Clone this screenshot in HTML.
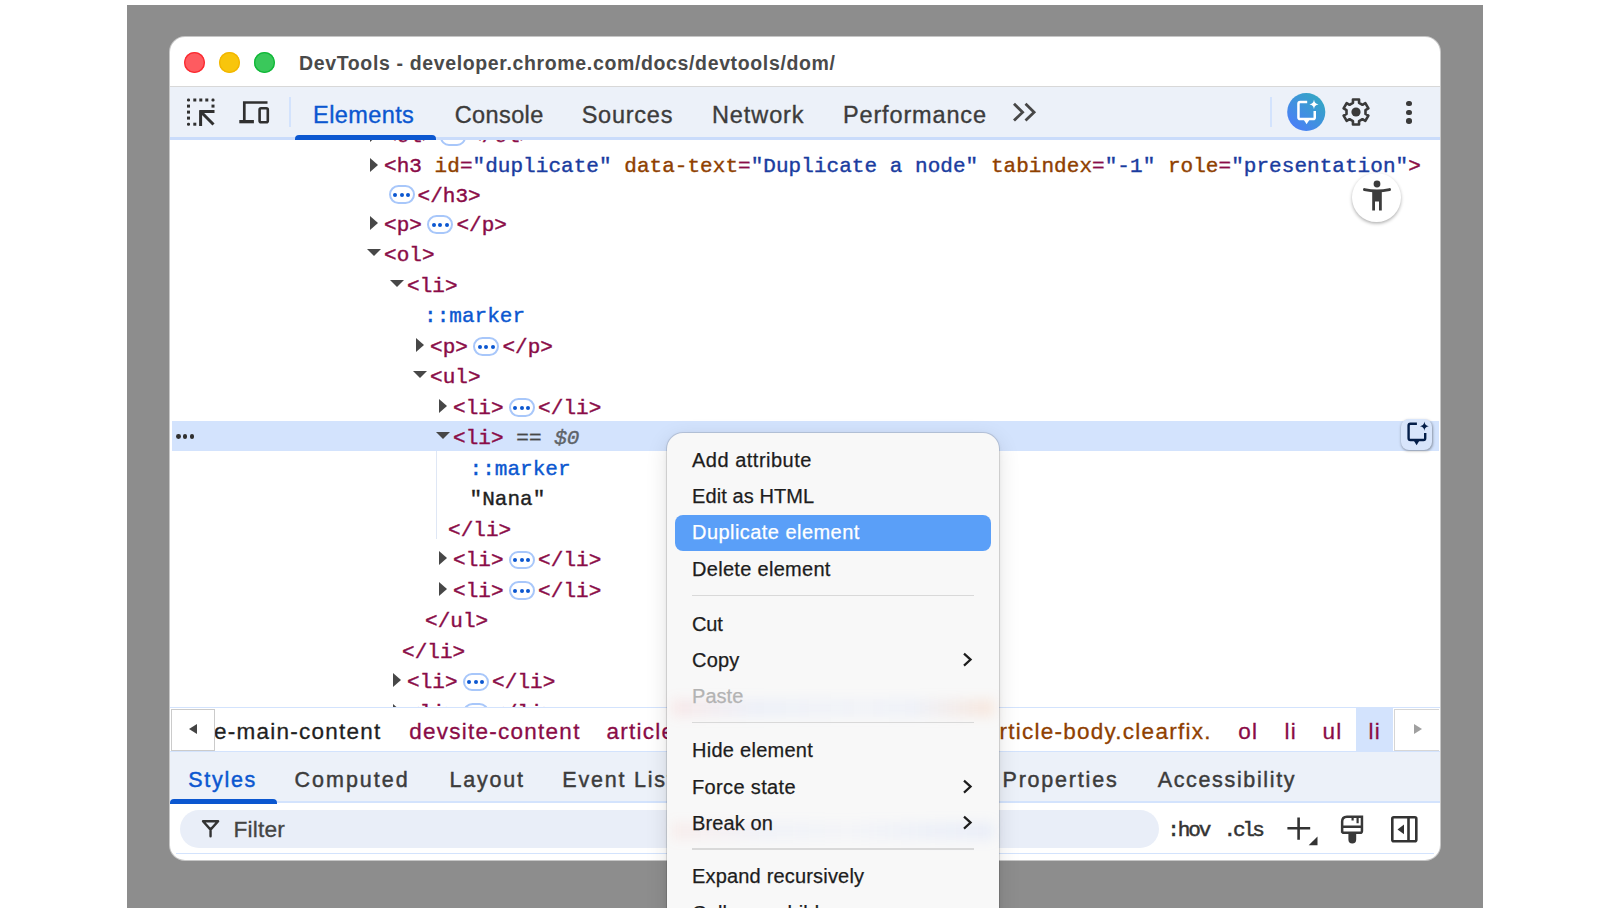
<!DOCTYPE html>
<html><head><meta charset="utf-8"><style>
*{margin:0;padding:0;box-sizing:border-box}
html,body{width:1600px;height:908px;overflow:hidden;background:#fff;font-family:"Liberation Sans",sans-serif}
#bg{position:absolute;left:127px;top:5px;width:1356px;height:903px;background:#8d8d8d}
#win{position:absolute;left:170px;top:37px;width:1270px;height:823px;background:#fff;border-radius:15px;box-shadow:0 0 0 1px #c6c6c6}
.a{position:absolute}
.t{position:absolute;white-space:pre;line-height:1;-webkit-text-stroke:0.3px currentColor}
.t.m{font-family:"Liberation Mono",monospace;font-size:21px;letter-spacing:0.04px;-webkit-text-stroke:0.4px currentColor}
.tg{color:#8a0c47}.an{color:#8f4000}.av{color:#1a3c9f}.ps{color:#0b57d0}.tx{color:#1f1f1f}
.bd{position:absolute;width:26.5px;height:18.5px;border:2px solid #a8c7fa;border-radius:9.5px}
.bd i{position:absolute;top:5.6px;width:4px;height:4px;border-radius:50%;background:#0b57d0}
.tr{position:absolute;width:0;height:0;border-top:7px solid transparent;border-bottom:7px solid transparent;border-left:8px solid #474747}
.td{position:absolute;width:0;height:0;border-left:7px solid transparent;border-right:7px solid transparent;border-top:7.5px solid #474747}
.mi{position:absolute;left:692px;font-size:20px;letter-spacing:0.45px;color:#1d1d1d;white-space:pre;line-height:1;-webkit-text-stroke:0.25px currentColor}
</style></head><body>
<div id="bg"></div>
<div id="win"></div>
<div class="a" style="left:184.1px;top:52.1px;width:21.2px;height:21.2px;border-radius:50%;background:#fe5b60;box-shadow:inset 0 0 0 1.3px #fb2a30"></div>
<div class="a" style="left:219.1px;top:52.1px;width:21.2px;height:21.2px;border-radius:50%;background:#f8c50c;box-shadow:inset 0 0 0 1.3px #f2b600"></div>
<div class="a" style="left:254.1px;top:52.1px;width:21.2px;height:21.2px;border-radius:50%;background:#3ac85b;box-shadow:inset 0 0 0 1.3px #10b838"></div>
<div class="t" style="left:299px;top:54.49px;font-size:19.5px;font-weight:bold;color:#4a4a4a;letter-spacing:0.64px;-webkit-text-stroke:0">DevTools - developer.chrome.com/docs/devtools/dom/</div>
<div class="a" style="left:170px;top:86px;width:1270px;height:1px;background:#d8d8d8"></div>
<div class="a" style="left:170px;top:87px;width:1270px;height:50px;background:#ecf1f9"></div>
<div class="a" style="left:170px;top:137px;width:1270px;height:3px;background:#cadcfb"></div>
<div class="a" style="left:288.5px;top:97px;width:2px;height:30px;background:#d3e3fd"></div>
<div class="a" style="left:1270px;top:97px;width:2px;height:30px;background:#d3e3fd"></div>
<svg class="a" style="left:184px;top:95px" width="34" height="34" viewBox="0 0 34 34">
<g fill="#303030">
<rect x="3" y="3.5" width="3" height="3" rx="1.2"/><rect x="9.3" y="3.5" width="3" height="3"/><rect x="15.3" y="3.5" width="3" height="3"/><rect x="21.3" y="3.5" width="3" height="3"/><rect x="27.5" y="3.5" width="3" height="3" rx="1.2"/>
<rect x="3" y="9.6" width="3" height="3"/><rect x="3" y="15.6" width="3" height="3"/><rect x="3" y="21.6" width="3" height="3"/><rect x="3" y="27.7" width="3" height="3" rx="1.2"/>
<rect x="9.3" y="27.7" width="3" height="3"/><rect x="27.5" y="9.6" width="3" height="3"/>
</g>
<path d="M15.6 16.5 H30.5 M16.6 15.3 V31 M16.6 16.5 L29.5 29.5" stroke="#303030" stroke-width="3" fill="none"/>
</svg>
<svg class="a" style="left:236px;top:98px" width="36" height="30" viewBox="0 0 36 30">
<path d="M8.3 25 V4.5 H31.5" stroke="#303030" stroke-width="2.7" fill="none"/>
<rect x="3.3" y="22" width="14.6" height="3.3" fill="#303030"/>
<rect x="23.6" y="10.2" width="8.2" height="14" rx="1.5" stroke="#303030" stroke-width="2.6" fill="none"/>
</svg>
<div class="t" style="left:313.1px;top:103.51px;font-size:23.5px;color:#0b57d0;letter-spacing:0.4px;-webkit-text-stroke:0.35px #0b57d0">Elements</div>
<div class="t" style="left:454.7px;top:103.51px;font-size:23.5px;color:#3c3c3c;letter-spacing:0.4px;-webkit-text-stroke:0.35px #3c3c3c">Console</div>
<div class="t" style="left:581.7px;top:103.51px;font-size:23.5px;color:#3c3c3c;letter-spacing:0.75px;-webkit-text-stroke:0.35px #3c3c3c">Sources</div>
<div class="t" style="left:712.0px;top:103.51px;font-size:23.5px;color:#3c3c3c;letter-spacing:0.9px;-webkit-text-stroke:0.35px #3c3c3c">Network</div>
<div class="t" style="left:843.0px;top:103.51px;font-size:23.5px;color:#3c3c3c;letter-spacing:0.85px;-webkit-text-stroke:0.35px #3c3c3c">Performance</div>
<div class="a" style="left:294.5px;top:135px;width:141.3px;height:5px;background:#0b57d0;border-radius:4px 4px 0 0"></div>
<svg class="a" style="left:1008px;top:98px" width="34" height="28" viewBox="0 0 34 28">
<path d="M6 5.8 L14.6 14.3 L6 22.6 M17.5 5.8 L26.1 14.3 L17.5 22.6" stroke="#474747" stroke-width="2.8" fill="none"/>
</svg>
<svg class="a" style="left:1286px;top:92px" width="40" height="40" viewBox="0 0 40 40">
<defs><linearGradient id="g1" x1="0.15" y1="0.9" x2="0.85" y2="0.1"><stop offset="0" stop-color="#4b7ff7"/><stop offset="1" stop-color="#33a6c4"/></linearGradient></defs>
<circle cx="20.25" cy="20" r="19.05" fill="url(#g1)"/>
<path d="M21.2 10.05 H14.2 Q12.45 10.05 12.45 11.8 V25.4 Q12.45 26.95 14.2 26.95 H27.2 Q28.75 26.95 28.75 25.4 V19" stroke="#fff" stroke-width="2.5" fill="none"/>
<path d="M16.6 26 L20.6 32.2 L24.6 26 Z" fill="#fff"/>
<path d="M28 7.6 C28.55 10.7 29.4 11.7 32.5 12.4 C29.4 13.1 28.55 14.1 28 17.2 C27.45 14.1 26.6 13.1 23.5 12.4 C26.6 11.7 27.45 10.7 28 7.6 Z" fill="#fff"/>
</svg>
<svg class="a" style="left:1335.8px;top:92.05px" width="40" height="40" viewBox="0 0 40 40">
<path d="M16.95 10.80 L16.95 7.45 L23.05 7.45 L23.05 10.80 L26.44 12.76 L29.34 11.08 L32.39 16.37 L29.49 18.04 L29.49 21.96 L32.39 23.63 L29.34 28.92 L26.44 27.24 L23.05 29.20 L23.05 32.55 L16.95 32.55 L16.95 29.20 L13.56 27.24 L10.66 28.92 L7.61 23.63 L10.51 21.96 L10.51 18.04 L7.61 16.37 L10.66 11.08 L13.56 12.76 Z" stroke="#3a3a3a" stroke-width="2.6" fill="none" stroke-linejoin="round"/>
<circle cx="20" cy="20" r="4.6" fill="#3a3a3a"/>
</svg>
<div class="a" style="left:1406.45px;top:100.9px;width:5.6px;height:5.6px;border-radius:50%;background:#3a3a3a"></div>
<div class="a" style="left:1406.45px;top:109.5px;width:5.6px;height:5.6px;border-radius:50%;background:#3a3a3a"></div>
<div class="a" style="left:1406.45px;top:118.05px;width:5.6px;height:5.6px;border-radius:50%;background:#3a3a3a"></div>
<div class="a" style="left:0;top:140px;width:1440px;height:567px;overflow:hidden"><div class="a" style="left:0;top:-140px;width:1600px;height:908px">
<div class="a" style="left:172px;top:421px;width:1267px;height:29.7px;background:#d3e3fd"></div>
<div class="a" style="left:435.5px;top:451px;width:1.5px;height:88px;background:#dfe7f5"></div>
<div class="tr" style="left:370.00px;top:127.50px"></div>
<div class="t m" style="left:384.00px;top:126.20px;"><span class="tg">&lt;ol&gt;</span></div>
<div class="bd" style="left:439.60px;top:127.95px"><i style="left:2.6px"></i><i style="left:9.1px"></i><i style="left:15.6px"></i></div>
<div class="t m" style="left:469.10px;top:126.20px;"><span class="tg">&lt;/ol&gt;</span></div>
<div class="tr" style="left:370.00px;top:157.50px"></div>
<div class="t m" style="left:384.00px;top:156.40px;"><span class="tg">&lt;h3 </span><span class="an">id</span><span class="tg">=</span><span class="av">"duplicate"</span> <span class="an">data-text</span><span class="tg">=</span><span class="av">"Duplicate a node"</span> <span class="an">tabindex</span><span class="tg">=</span><span class="av">"-1"</span> <span class="an">role</span><span class="tg">=</span><span class="av">"presentation"</span><span class="tg">&gt;</span></div>
<div class="bd" style="left:388.50px;top:185.25px"><i style="left:2.6px"></i><i style="left:9.1px"></i><i style="left:15.6px"></i></div>
<div class="t m" style="left:417.50px;top:185.65px;"><span class="tg">&lt;/h3&gt;</span></div>
<div class="tr" style="left:370.00px;top:215.60px"></div>
<div class="t m" style="left:384.00px;top:214.50px;"><span class="tg">&lt;p&gt;</span></div>
<div class="bd" style="left:426.95px;top:215.35px"><i style="left:2.6px"></i><i style="left:9.1px"></i><i style="left:15.6px"></i></div>
<div class="t m" style="left:456.45px;top:214.50px;"><span class="tg">&lt;/p&gt;</span></div>
<div class="td" style="left:367.00px;top:249.10px"></div>
<div class="t m" style="left:384.00px;top:245.00px;"><span class="tg">&lt;ol&gt;</span></div>
<div class="td" style="left:390.00px;top:279.60px"></div>
<div class="t m" style="left:407.00px;top:275.50px;"><span class="tg">&lt;li&gt;</span></div>
<div class="t m" style="left:424.00px;top:306.00px;"><span class="ps">::marker</span></div>
<div class="tr" style="left:416.00px;top:337.60px"></div>
<div class="t m" style="left:430.00px;top:336.50px;"><span class="tg">&lt;p&gt;</span></div>
<div class="bd" style="left:472.95px;top:337.35px"><i style="left:2.6px"></i><i style="left:9.1px"></i><i style="left:15.6px"></i></div>
<div class="t m" style="left:502.45px;top:336.50px;"><span class="tg">&lt;/p&gt;</span></div>
<div class="td" style="left:413.00px;top:371.10px"></div>
<div class="t m" style="left:430.00px;top:367.00px;"><span class="tg">&lt;ul&gt;</span></div>
<div class="tr" style="left:439.00px;top:398.60px"></div>
<div class="t m" style="left:453.00px;top:397.50px;"><span class="tg">&lt;li&gt;</span></div>
<div class="bd" style="left:508.60px;top:398.35px"><i style="left:2.6px"></i><i style="left:9.1px"></i><i style="left:15.6px"></i></div>
<div class="t m" style="left:538.10px;top:397.50px;"><span class="tg">&lt;/li&gt;</span></div>
<div class="td" style="left:436.00px;top:432.10px"></div>
<div class="t m" style="left:453.00px;top:428.00px;"><span class="tg">&lt;li&gt;</span> <span style="color:#474747">==</span> <span style="color:#5f6368;font-style:italic">$0</span></div>
<div class="t m" style="left:469.50px;top:458.50px;"><span class="ps">::marker</span></div>
<div class="t m" style="left:469.50px;top:489.00px;"><span class="tx">"Nana"</span></div>
<div class="t m" style="left:448.00px;top:519.50px;"><span class="tg">&lt;/li&gt;</span></div>
<div class="tr" style="left:439.00px;top:551.10px"></div>
<div class="t m" style="left:453.00px;top:550.00px;"><span class="tg">&lt;li&gt;</span></div>
<div class="bd" style="left:508.60px;top:550.85px"><i style="left:2.6px"></i><i style="left:9.1px"></i><i style="left:15.6px"></i></div>
<div class="t m" style="left:538.10px;top:550.00px;"><span class="tg">&lt;/li&gt;</span></div>
<div class="tr" style="left:439.00px;top:581.60px"></div>
<div class="t m" style="left:453.00px;top:580.50px;"><span class="tg">&lt;li&gt;</span></div>
<div class="bd" style="left:508.60px;top:581.35px"><i style="left:2.6px"></i><i style="left:9.1px"></i><i style="left:15.6px"></i></div>
<div class="t m" style="left:538.10px;top:580.50px;"><span class="tg">&lt;/li&gt;</span></div>
<div class="t m" style="left:425.00px;top:611.00px;"><span class="tg">&lt;/ul&gt;</span></div>
<div class="t m" style="left:402.00px;top:641.50px;"><span class="tg">&lt;/li&gt;</span></div>
<div class="tr" style="left:393.00px;top:673.10px"></div>
<div class="t m" style="left:407.00px;top:672.00px;"><span class="tg">&lt;li&gt;</span></div>
<div class="bd" style="left:462.60px;top:672.85px"><i style="left:2.6px"></i><i style="left:9.1px"></i><i style="left:15.6px"></i></div>
<div class="t m" style="left:492.10px;top:672.00px;"><span class="tg">&lt;/li&gt;</span></div>
<div class="tr" style="left:393.00px;top:703.60px"></div>
<div class="t m" style="left:407.00px;top:702.50px;"><span class="tg">&lt;li&gt;</span></div>
<div class="bd" style="left:462.60px;top:703.35px"><i style="left:2.6px"></i><i style="left:9.1px"></i><i style="left:15.6px"></i></div>
<div class="t m" style="left:492.10px;top:702.50px;"><span class="tg">&lt;/li&gt;</span></div>
<div class="a" style="left:175.9px;top:434.0px;width:4.8px;height:4.8px;border-radius:50%;background:#303030"></div>
<div class="a" style="left:182.7px;top:434.0px;width:4.8px;height:4.8px;border-radius:50%;background:#303030"></div>
<div class="a" style="left:189.6px;top:434.0px;width:4.8px;height:4.8px;border-radius:50%;background:#303030"></div>
<div class="a" style="left:1401.2px;top:419px;width:30.6px;height:30.7px;border-radius:8px;background:#d8e5fb;box-shadow:0.5px 1px 2.5px rgba(0,0,0,0.35)"></div>
<svg class="a" style="left:1401px;top:419px" width="31" height="31" viewBox="0 0 31 31">
<path d="M15.9 4.8 H9.4 Q7.6 4.8 7.6 6.6 V19.3 Q7.6 21 9.4 21 H22.5 Q24.2 21 24.2 19.3 V14.1" stroke="#041e49" stroke-width="2.4" fill="none"/>
<path d="M11.8 20 L15.6 26.2 L19.4 20 Z" fill="#041e49"/>
<path d="M23.4 2.6 C23.9 5.6 24.8 6.6 27.9 7.25 C24.8 7.9 23.9 8.9 23.4 11.9 C22.9 8.9 22 7.9 18.9 7.25 C22 6.6 22.9 5.6 23.4 2.6 Z" fill="#041e49"/>
</svg>
<div class="a" style="left:1352.1px;top:173.2px;width:49px;height:48.5px;border-radius:50%;background:#fff;box-shadow:0 1.5px 3.5px rgba(0,0,0,0.32)"></div>
<svg class="a" style="left:1352px;top:173px" width="50" height="50" viewBox="0 0 50 50">
<circle cx="25" cy="11" r="3.4" fill="#3c3c3c"/>
<path d="M12.5 16.6 Q25 19.5 37.5 16.6" stroke="#3c3c3c" stroke-width="3" fill="none" stroke-linecap="round"/>
<path d="M20.2 17.5 H29.8 V37.5 H27 V28.5 H23 V37.5 H20.2 Z" fill="#3c3c3c"/>
</svg>
</div></div>
<div class="a" style="left:170px;top:706.5px;width:1270px;height:1.2px;background:#d3e3fd"></div>
<div class="a" style="left:170px;top:751.2px;width:1270px;height:2px;background:#d3e3fd"></div>
<div class="a" style="left:1355.7px;top:707.5px;width:37.3px;height:43.5px;background:#d3e3fd"></div>
<div class="t" style="left:214.00px;top:720.55px;font-size:22.5px;letter-spacing:1.25px;color:#1f1f1f">e-main-content</div>
<div class="t" style="left:409.30px;top:720.55px;font-size:22.5px;letter-spacing:1.25px;color:#8a0c47">devsite-content</div>
<div class="t" style="left:606.60px;top:720.55px;font-size:22.5px;letter-spacing:1.25px;color:#8a0c47">article</div>
<div class="t" style="left:999.50px;top:720.55px;font-size:22.5px;letter-spacing:1.25px;color:#8f4000">rticle-body.clearfix.</div>
<div class="t" style="left:1238.30px;top:720.55px;font-size:22.5px;letter-spacing:1.25px;color:#8a0c47">ol</div>
<div class="t" style="left:1284.60px;top:720.55px;font-size:22.5px;letter-spacing:1.25px;color:#8a0c47">li</div>
<div class="t" style="left:1322.60px;top:720.55px;font-size:22.5px;letter-spacing:1.25px;color:#8a0c47">ul</div>
<div class="t" style="left:1368.40px;top:720.55px;font-size:22.5px;letter-spacing:1.25px;color:#8a0c47">li</div>
<div class="a" style="left:171.2px;top:709.3px;width:43.8px;height:41.5px;background:#fff;border:1.3px solid #cbcbcb"></div>
<div class="a" style="left:189px;top:724px;width:0;height:0;border-top:5.5px solid transparent;border-bottom:5.5px solid transparent;border-right:8px solid #444"></div>
<div class="a" style="left:1394.4px;top:709.2px;width:45px;height:41.5px;background:#fff;border:1px solid #d6d6d6;border-right:none"></div>
<div class="a" style="left:1414px;top:723.5px;width:0;height:0;border-top:5px solid transparent;border-bottom:5px solid transparent;border-left:8px solid #a0a0a0"></div>
<div class="a" style="left:170px;top:752.3px;width:1270px;height:48.5px;background:#ecf1f9"></div>
<div class="a" style="left:170px;top:800.8px;width:1270px;height:2.2px;background:#d3e3fd"></div>
<div class="t" style="left:188.25px;top:770.40px;font-size:21.5px;letter-spacing:1.7px;color:#0b57d0;-webkit-text-stroke:0.45px #0b57d0">Styles</div>
<div class="t" style="left:294.50px;top:770.40px;font-size:21.5px;letter-spacing:2.0px;color:#3c3c3c;-webkit-text-stroke:0.45px #3c3c3c">Computed</div>
<div class="t" style="left:449.50px;top:770.40px;font-size:21.5px;letter-spacing:1.8px;color:#3c3c3c;-webkit-text-stroke:0.45px #3c3c3c">Layout</div>
<div class="t" style="left:562.25px;top:770.40px;font-size:21.5px;letter-spacing:1.8px;color:#3c3c3c;-webkit-text-stroke:0.45px #3c3c3c">Event Listeners</div>
<div class="t" style="left:1002.50px;top:770.40px;font-size:21.5px;letter-spacing:1.8px;color:#3c3c3c;-webkit-text-stroke:0.45px #3c3c3c">Properties</div>
<div class="t" style="left:1157.70px;top:770.40px;font-size:21.5px;letter-spacing:1.65px;color:#3c3c3c;-webkit-text-stroke:0.45px #3c3c3c">Accessibility</div>
<div class="a" style="left:170px;top:799.4px;width:106.8px;height:4.2px;background:#0b57d0;border-radius:4px 4px 0 0"></div>
<div class="a" style="left:180px;top:810px;width:979px;height:37.6px;border-radius:19px;background:#e9eef8"></div>
<svg class="a" style="left:198px;top:816px" width="26" height="26" viewBox="0 0 26 26">
<path d="M5 5.2 H20.1 L12.55 13.6 Z M12.55 13 V20.3" stroke="#333" stroke-width="2.4" fill="none" stroke-linejoin="round" stroke-linecap="round"/>
</svg>
<div class="t" style="left:233.5px;top:817.78px;font-size:22.7px;color:#444;letter-spacing:0.2px">Filter</div>
<div class="t m" style="left:1167.3px;top:819.50px;color:#333;letter-spacing:-2.1px;-webkit-text-stroke:0.5px #333">:hov</div>
<div class="t m" style="left:1223.4px;top:819.50px;color:#333;letter-spacing:-3px;-webkit-text-stroke:0.5px #333">.cls</div>
<svg class="a" style="left:1284px;top:814px" width="36" height="34" viewBox="0 0 36 34">
<path d="M3.4 14.3 H26.2 M14.6 3.6 V25.7" stroke="#333" stroke-width="2.6" fill="none"/>
<path d="M33.5 22.5 V31.3 H24.7 Z" fill="#333"/>
</svg>
<svg class="a" style="left:1338px;top:814px" width="28" height="32" viewBox="0 0 28 32">
<path d="M4.15 18.75 V7.6 Q4.15 2.85 8.9 2.85 H23.95 V16.9 Q23.95 18.75 22.1 18.75 H6 Q4.15 18.75 4.15 16.9 Z M4.15 12.8 H23.95" stroke="#383838" stroke-width="2.5" fill="none"/>
<path d="M14.6 3 V6.6 M19.6 3 V9.2" stroke="#383838" stroke-width="2.2"/>
<path d="M10.4 19.5 H18.2 V25.6 A3.9 3.9 0 0 1 10.4 25.6 Z" fill="#383838"/>
</svg>
<svg class="a" style="left:1388px;top:813px" width="32" height="32" viewBox="0 0 32 32">
<rect x="4.3" y="4.3" width="24" height="24" rx="1.5" stroke="#333" stroke-width="2.6" fill="none"/>
<path d="M20.5 4 V28.5" stroke="#333" stroke-width="2.6"/>
<path d="M16 11.5 V21.3 L9.5 16.4 Z" fill="#333"/>
</svg>
<div class="a" style="left:176px;top:852.8px;width:1258px;height:1.5px;background:#d3e3fd"></div>
<div class="a" style="left:666.6px;top:432.8px;width:332.2px;height:520px;border-radius:16px;background:#f8f8f8;box-shadow:0 0 0 1px rgba(0,0,0,0.11),0 6px 22px rgba(0,0,0,0.12),0 1px 4px rgba(0,0,0,0.08)"></div>
<div class="a" style="left:672px;top:699px;width:322px;height:18px;filter:blur(6px);background:linear-gradient(90deg,rgba(255,110,110,0.10),rgba(120,160,255,0.08) 25%,rgba(140,170,255,0.06) 60%,rgba(120,160,255,0.07) 75%,rgba(255,140,70,0.14))"></div>
<div class="a" style="left:672px;top:822px;width:322px;height:18px;filter:blur(6px);background:linear-gradient(90deg,rgba(255,120,100,0.08),rgba(120,160,255,0.06) 30%,rgba(140,170,255,0.04) 55%,rgba(120,160,255,0.08) 80%,rgba(120,160,255,0.10))"></div>
<div class="a" style="left:675px;top:514.5px;width:316px;height:36px;border-radius:8px;background:#5a9ff8"></div>
<div class="mi" style="top:450.37px;color:#1d1d1d;letter-spacing:0.5px">Add attribute</div>
<div class="mi" style="top:486.37px;color:#1d1d1d;letter-spacing:0.1px">Edit as HTML</div>
<div class="mi" style="top:522.37px;color:#fff;letter-spacing:0.45px">Duplicate element</div>
<div class="mi" style="top:559.37px;color:#1d1d1d;letter-spacing:0.3px">Delete element</div>
<div class="mi" style="top:613.77px;color:#1d1d1d;letter-spacing:-0.2px">Cut</div>
<div class="mi" style="top:649.77px;color:#1d1d1d;letter-spacing:0.2px">Copy</div>
<svg class="a" style="left:960px;top:649.70px" width="16" height="18" viewBox="0 0 16 18"><path d="M4 3.6 L10.6 9.6 L4 15.6" stroke="#1d1d1d" stroke-width="2.2" fill="none"/></svg>
<div class="mi" style="top:686.37px;color:#b3b3b3;letter-spacing:0.05px">Paste</div>
<div class="mi" style="top:739.77px;color:#1d1d1d;letter-spacing:0.27px">Hide element</div>
<div class="mi" style="top:776.97px;color:#1d1d1d;letter-spacing:0.35px">Force state</div>
<svg class="a" style="left:960px;top:776.90px" width="16" height="18" viewBox="0 0 16 18"><path d="M4 3.6 L10.6 9.6 L4 15.6" stroke="#1d1d1d" stroke-width="2.2" fill="none"/></svg>
<div class="mi" style="top:812.77px;color:#1d1d1d;letter-spacing:0.1px">Break on</div>
<svg class="a" style="left:960px;top:812.70px" width="16" height="18" viewBox="0 0 16 18"><path d="M4 3.6 L10.6 9.6 L4 15.6" stroke="#1d1d1d" stroke-width="2.2" fill="none"/></svg>
<div class="mi" style="top:866.37px;color:#1d1d1d;letter-spacing:0.18px">Expand recursively</div>
<div class="mi" style="top:902.87px;color:#1d1d1d;letter-spacing:0.2px">Collapse children</div>
<div class="a" style="left:692px;top:594.75px;width:282px;height:1.5px;background:#d9d9d9"></div>
<div class="a" style="left:692px;top:721.65px;width:282px;height:1.5px;background:#d9d9d9"></div>
<div class="a" style="left:692px;top:848.25px;width:282px;height:1.5px;background:#d9d9d9"></div>
</body></html>
